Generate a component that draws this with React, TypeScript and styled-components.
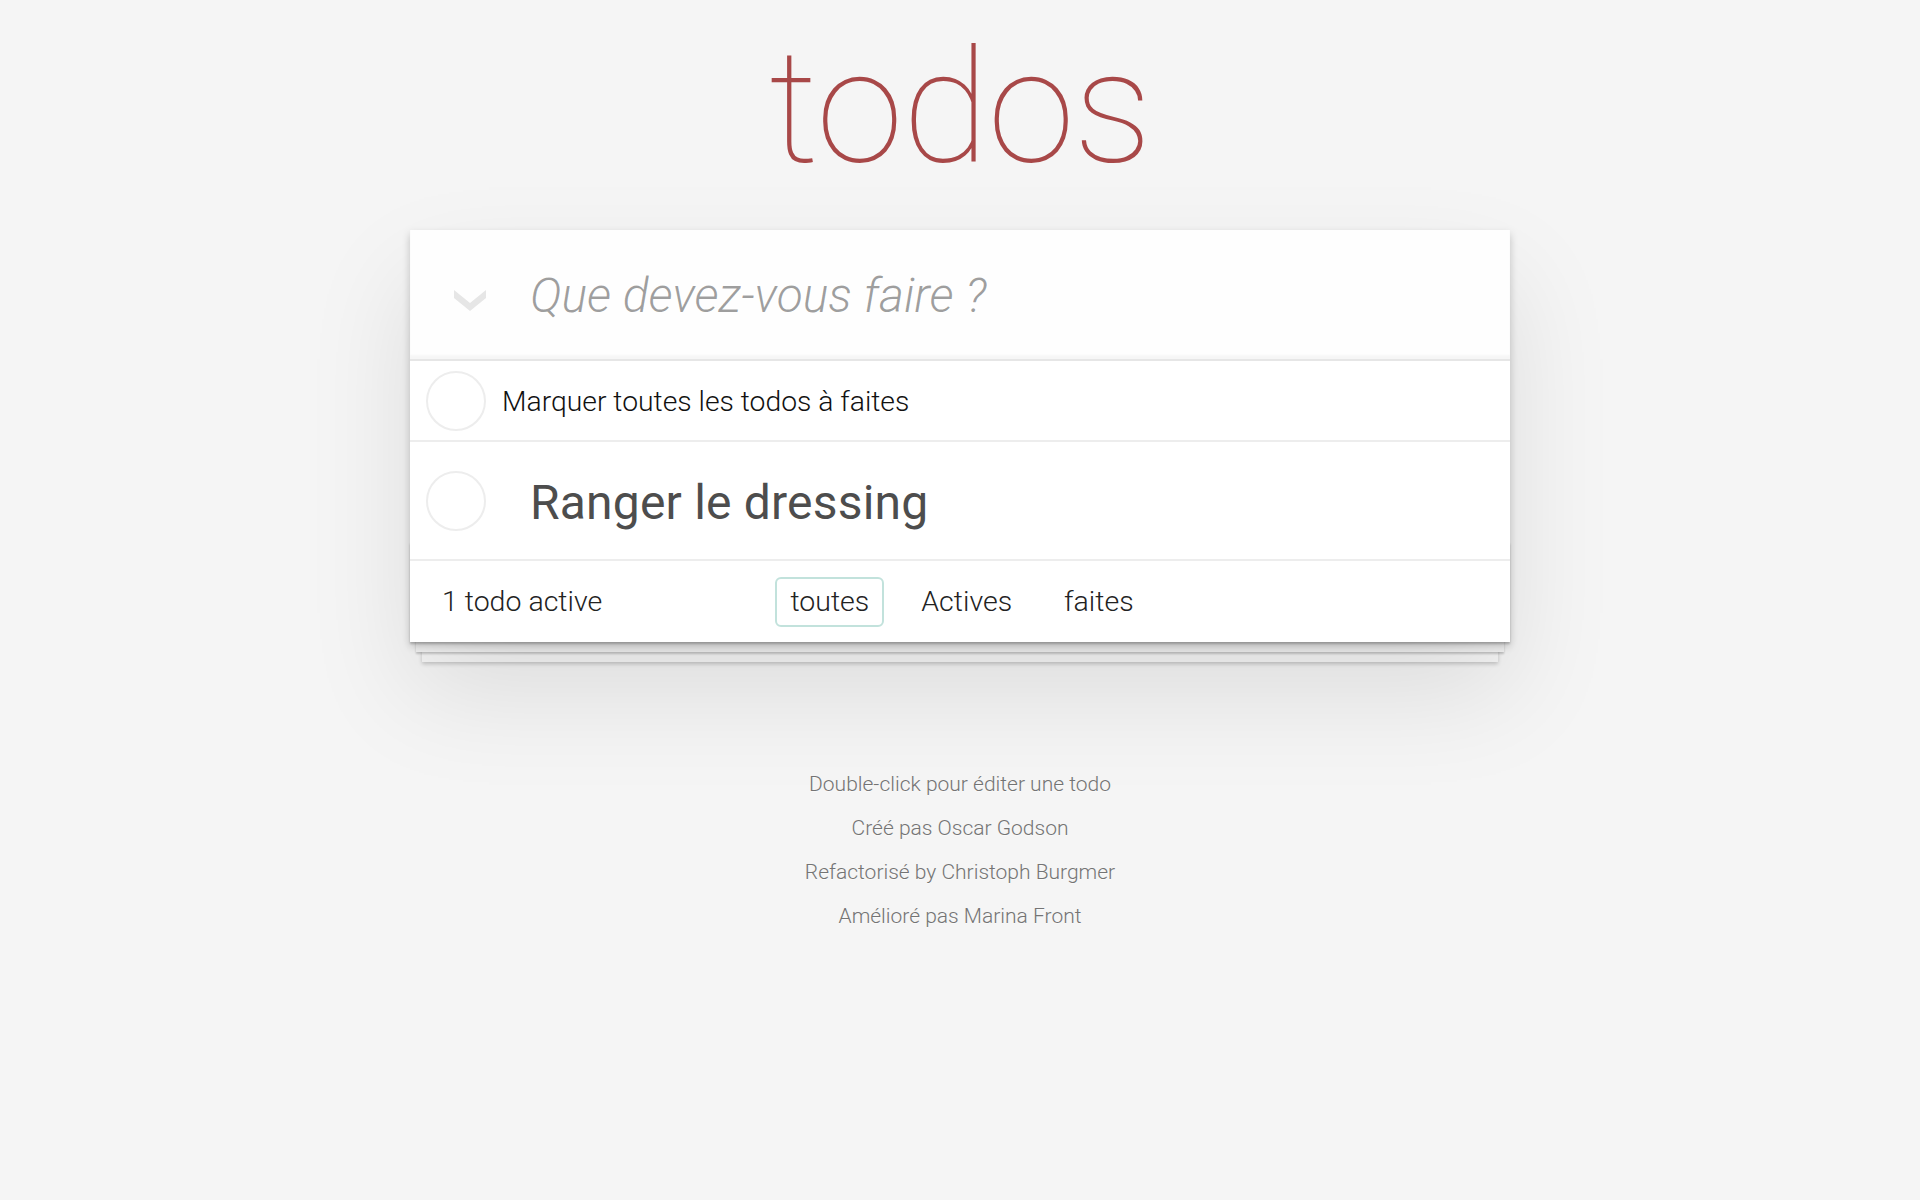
import React from "react";
import styled, { createGlobalStyle } from "styled-components";

const GlobalStyle = createGlobalStyle`
  html, body {
    margin: 0;
    padding: 0;
  }
  body {
    background: #f5f5f5;
    font-family: "Helvetica Neue", Roboto, "Liberation Sans", Arial, sans-serif;
    font-weight: 300;
    color: #111;
    -webkit-font-smoothing: antialiased;
  }
  * { box-sizing: border-box; }
`;

const Page = styled.div`
  display: flex;
  flex-direction: column;
  align-items: center;
  min-height: 1200px;
`;

const Title = styled.h1`
  margin: 0;
  padding-top: 27px;
  height: 230px;
  font-size: 158px;
  line-height: 160px;
  font-weight: 100;
  color: #a84848;
  text-align: center;
  letter-spacing: -1px;
`;

const Card = styled.section`
  width: 1100px;
  background: #fff;
  position: relative;
  box-shadow: 0 4px 8px 0 rgba(0, 0, 0, 0.2), 0 50px 100px 0 rgba(0, 0, 0, 0.1);
`;

const Header = styled.header`
  display: flex;
  align-items: center;
  height: 131px;
  background: rgba(0, 0, 0, 0.003);
  box-shadow: inset 0 -4px 2px rgba(0, 0, 0, 0.03);
  border-bottom: 2px solid #e6e6e6;
`;

const ChevronCell = styled.div`
  width: 120px;
  flex: 0 0 120px;
  display: flex;
  justify-content: center;
  align-items: center;
  padding-top: 12px;
`;

const NewTodo = styled.input`
  flex: 1;
  border: none;
  outline: none;
  background: transparent;
  font-family: inherit;
  font-size: 48px;
  font-weight: 300;
  color: #4d4d4d;
  padding: 0 32px 0 0;
  margin-top: 2px;
  &::placeholder {
    font-style: italic;
    font-weight: 300;
    color: rgba(0, 0, 0, 0.38);
  }
`;

const Row = styled.div<{ $height: number }>`
  display: flex;
  align-items: center;
  height: ${(p) => p.$height}px;
  border-bottom: 2px solid #ededed;
`;

const CheckCell = styled.div<{ $width: number }>`
  flex: 0 0 ${(p) => p.$width}px;
  display: flex;
  align-items: center;
  padding-left: 16px;
`;

const Circle = styled.span`
  display: block;
  width: 60px;
  height: 60px;
  border-radius: 50%;
  border: 2px solid #ededed;
`;

const ToggleLabel = styled.span`
  font-size: 28.3px;
  font-weight: 300;
  color: #111;
  padding-top: 2px;
`;

const TodoLabel = styled.span`
  font-size: 48px;
  font-weight: 400;
  color: #4d4d4d;
  letter-spacing: 0.2px;
  padding-top: 4px;
`;

const Footer = styled.footer`
  position: relative;
  display: grid;
  grid-template-columns: 1fr auto 1fr;
  align-items: center;
  height: 81px;
  padding: 0 32px;
  color: #222;
  &::before {
    content: "";
    position: absolute;
    right: 0;
    bottom: 0;
    left: 0;
    height: 100px;
    overflow: hidden;
    z-index: -1;
    box-shadow: 0 2px 2px rgba(0, 0, 0, 0.2), 0 16px 0 -6px #f6f6f6,
      0 18px 2px -6px rgba(0, 0, 0, 0.2), 0 32px 0 -12px #f6f6f6,
      0 34px 4px -12px rgba(0, 0, 0, 0.2);
  }
`;

const Count = styled.span`
  font-size: 28.5px;
  font-weight: 300;
  color: #222;
`;

const Filters = styled.ul`
  display: flex;
  gap: 10px;
  list-style: none;
  margin: 0;
  padding: 0 0 0 4px;
`;

const FilterLink = styled.a<{ $selected?: boolean }>`
  display: block;
  margin: 0 6px;
  padding: 6px 13px;
  border: 2px solid ${(p) => (p.$selected ? "#c2e2dc" : "transparent")};
  border-radius: 6px;
  font-size: 28.5px;
  font-weight: 300;
  color: #222;
  text-decoration: none;
  line-height: 34px;
`;

const Info = styled.footer`
  margin-top: 131px;
  display: flex;
  flex-direction: column;
  align-items: center;
  gap: 22px;
  font-size: 21px;
  color: #747474;
  text-shadow: 0 1px 0 rgba(255, 255, 255, 0.5);
  p {
    margin: 0;
    line-height: 22px;
  }
`;

const Chevron = () => (
  <svg width="32" height="21" viewBox="0 0 32 21" aria-hidden="true">
    <path d="M0 0 L16 13 L32 0 L32 8 L16 21 L0 8 Z" fill="#e6e6e6" />
  </svg>
);

export default function App() {
  return (
    <>
      <GlobalStyle />
      <Page>
        <Title>todos</Title>
        <Card>
          <Header>
            <ChevronCell>
              <Chevron />
            </ChevronCell>
            <NewTodo placeholder="Que devez-vous faire ?" />
          </Header>
          <Row $height={81}>
            <CheckCell $width={92}>
              <Circle />
            </CheckCell>
            <ToggleLabel>Marquer toutes les todos à faites</ToggleLabel>
          </Row>
          <Row $height={119}>
            <CheckCell $width={120}>
              <Circle />
            </CheckCell>
            <TodoLabel>Ranger le dressing</TodoLabel>
          </Row>
          <Footer>
            <Count>1 todo active</Count>
            <Filters>
              <li>
                <FilterLink href="#/" $selected>
                  toutes
                </FilterLink>
              </li>
              <li>
                <FilterLink href="#/active">Actives</FilterLink>
              </li>
              <li>
                <FilterLink href="#/completed">faites</FilterLink>
              </li>
            </Filters>
            <span />
          </Footer>
        </Card>
        <Info>
          <p>Double-click pour éditer une todo</p>
          <p>Créé pas Oscar Godson</p>
          <p>Refactorisé by Christoph Burgmer</p>
          <p>Amélioré pas Marina Front</p>
        </Info>
      </Page>
    </>
  );
}
